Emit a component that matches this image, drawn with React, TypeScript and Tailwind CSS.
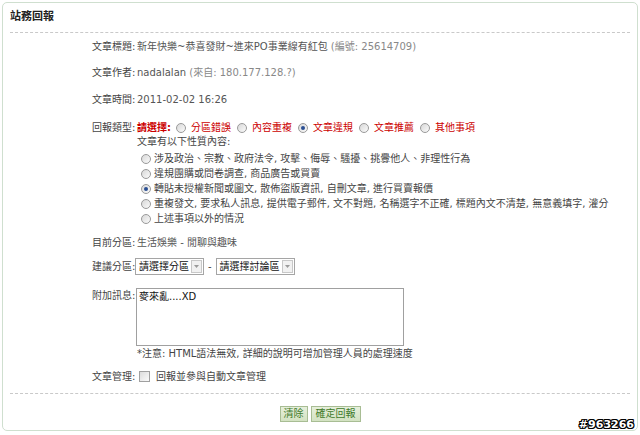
import React from "react";

const Radio = ({ checked = false, className = "" }: { checked?: boolean; className?: string }) => (
  <span
    className={
      "inline-flex shrink-0 items-center justify-center w-[10px] h-[10px] rounded-full border border-[#9a9a9a] bg-gradient-to-br from-[#d8d8d8] to-[#fbfbfb] " +
      className
    }
  >
    {checked && <span className="w-[4px] h-[4px] rounded-full bg-[#2a4f93]" />}
  </span>
);

const Select = ({ text, w }: { text: string; w: string }) => (
  <div className={"h-[17px] border border-[#a5a5a5] bg-white flex items-stretch " + w}>
    <span className="flex-1 pl-[3px] leading-[15px] text-[#111]">{text}</span>
    <span className="w-[11px] my-[1px] mr-[1px] border border-[#c8c8c8] bg-[#f1f1f1] flex items-center justify-center">
      <svg width="5" height="3" viewBox="0 0 5 3">
        <path d="M0 0 L5 0 L2.5 3 Z" fill="#9a9a9a" />
      </svg>
    </span>
  </div>
);

const Row = ({ label, children, className = "" }: { label: string; children?: React.ReactNode; className?: string }) => (
  <div className={"flex leading-[14px] " + className}>
    <span className="w-[45px] shrink-0 text-[#444]">{label}</span>
    <div className="flex-1">{children}</div>
  </div>
);

export default function App() {
  const options = ["分區錯誤", "內容重複", "文章違規", "文章推薦", "其他事項"];
  const items = [
    "涉及政治、宗教、政府法令, 攻擊、侮辱、騷擾、挑釁他人、非理性行為",
    "違規團購或問卷調查, 商品廣告或買賣",
    "轉貼未授權新聞或圖文, 散佈盜版資訊, 自刪文章, 進行買賣報價",
    "重複發文, 要求私人訊息, 提供電子郵件, 文不對題, 名稱選字不正確, 標題內文不清楚, 無意義填字, 灌分",
    "上述事項以外的情況",
  ];
  return (
    <div className="relative w-[640px] h-[435px] bg-white overflow-hidden font-['DejaVu_Sans','Noto_Sans_CJK_TC',sans-serif] text-[10px] text-[#555]">
      <div className="mx-[2px] mt-[2px] h-[429px] border border-[#cfdfcf] rounded-[5px] flex flex-col">
        <div className="px-[7px] pt-[7px] leading-[14px] text-[11px] font-bold text-[#222]">站務回報</div>
        <div className="mx-[7px] mt-[8px] border-t border-dashed border-[#c9c9c9]" />

        <div className="pl-[89px] flex flex-col">
          <Row label="文章標題:" className="mt-[7px]">
            新年快樂~恭喜發財~進來PO事業線有紅包 <span className="text-[#888]">(編號: 25614709)</span>
          </Row>
          <Row label="文章作者:" className="mt-[12px]">
            nadalalan <span className="text-[#888]">(來自: 180.177.128.?)</span>
          </Row>
          <Row label="文章時間:" className="mt-[13px]">
            2011-02-02 16:26
          </Row>
          <Row label="回報類型:" className="mt-[14px]">
            <div className="flex items-center text-[#c00]">
              <span className="font-bold">請選擇:</span>
              {options.map((o, i) => (
                <span key={o} className="flex items-center">
                  <Radio checked={i === 2} className={i === 0 ? "ml-[5px] mr-[5px]" : "ml-[6px] mr-[5px]"} />
                  <span>{o}</span>
                </span>
              ))}
            </div>
          </Row>
          <div className="flex leading-[14px]">
            <span className="w-[45px] shrink-0" />
            <div className="flex-1 flex flex-col">
              <span className="text-[#444]">文章有以下性質內容:</span>
              <div className="mt-[2px] flex flex-col">
                {items.map((t, i) => (
                  <div key={t} className="flex items-center h-[15px] pl-[4px] text-[#444]">
                    <Radio checked={i === 2} className="mr-[3px]" />
                    <span>{t}</span>
                  </div>
                ))}
              </div>
            </div>
          </div>

          <Row label="目前分區:" className="mt-[10px]">
            生活娛樂 - 閒聊與趣味
          </Row>

          <div className="flex items-center mt-[8px] h-[17px]">
            <span className="w-[45px] shrink-0 text-[#444] leading-[14px]">建議分區:</span>
            <Select text="請選擇分區" w="w-[69px] -ml-[2px]" />
            <span className="mx-[4px] text-[#444]">-</span>
            <Select text="請選擇討論區" w="w-[79px]" />
          </div>

          <div className="flex mt-[13px]">
            <span className="w-[45px] shrink-0 text-[#444] leading-[14px] pt-[1px]">附加訊息:</span>
            <div className="flex flex-col">
              <div className="-ml-[1px] w-[268px] h-[58px] border border-[#a0a0a0] px-[2px] pt-[1px] leading-[14px] text-[#111]">
                麥來亂....XD
              </div>
              <span className="mt-[1px] leading-[14px] text-[#444]">*注意: HTML語法無效, 詳細的說明可增加管理人員的處理速度</span>
            </div>
          </div>

          <div className="flex items-center mt-[8px] h-[14px]">
            <span className="w-[47px] shrink-0 text-[#444]">文章管理:</span>
            <span className="w-[11px] h-[11px] border border-[#a0a0a0] bg-gradient-to-br from-[#dcdcdc] to-[#fafafa]" />
            <span className="ml-[6px] text-[#444]">回報並參與自動文章管理</span>
          </div>
        </div>

        <div className="mx-[7px] mt-[10px] border-t border-dashed border-[#c9c9c9]" />

        <div className="mt-[12px] flex justify-center gap-[3px]">
          <button className="h-[16px] px-[3px] border border-[#a8bd94] bg-gradient-to-b from-[#e6efdb] to-[#d3e2c2] text-[#3f7a2a] leading-[14px] text-[10px]">
            清除
          </button>
          <button className="h-[16px] px-[4px] border border-[#a8bd94] bg-gradient-to-b from-[#e6efdb] to-[#d3e2c2] text-[#3f7a2a] leading-[14px] text-[10px]">
            確定回報
          </button>
        </div>
      </div>

      <div className="absolute right-[6px] bottom-[4px] font-['DejaVu_Sans',sans-serif] font-bold text-[11px] leading-[12px] text-white [text-shadow:1px_0_0_#000,-1px_0_0_#000,0_1px_0_#000,0_-1px_0_#000,1px_1px_0_#000,-1px_-1px_0_#000,1px_-1px_0_#000,-1px_1px_0_#000]">
        #963266
      </div>
    </div>
  );
}
